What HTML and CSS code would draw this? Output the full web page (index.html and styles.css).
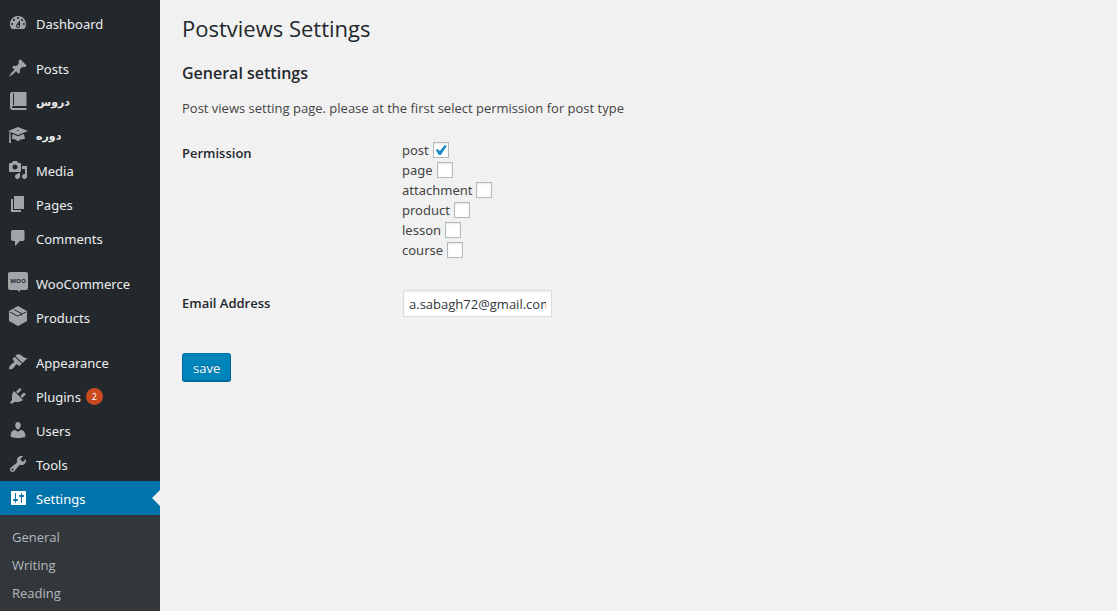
FILE: index.html
```html
<!DOCTYPE html>
<html lang="en">
<head>
<meta charset="utf-8">
<title>Postviews Settings</title>
<link rel="stylesheet" href="styles.css">
</head>
<body>
<div class="layout">
  <nav class="sidebar" aria-label="Main menu">
    <ul class="menu">
      <li><a class="menu-link" href="#"><svg class="icon" viewBox="0 0 20 20"><path fill-rule="evenodd" d="M3.76 16h12.48A7.998 7.998 0 0 0 10 3a7.998 7.998 0 0 0-6.24 13zM10 4c.55 0 1 .45 1 1s-.45 1-1 1-1-.45-1-1 .45-1 1-1zM6 6c.55 0 1 .45 1 1s-.45 1-1 1-1-.45-1-1 .45-1 1-1zm8 0c.55 0 1 .45 1 1s-.45 1-1 1-1-.45-1-1 .45-1 1-1zM12 7v6c0 1.100-.9 2-2 2s-2-.9-2-2c0-.57.24-1.080.63-1.450zM4 10c.55 0 1 .45 1 1s-.45 1-1 1-1-.45-1-1 .45-1 1-1zm12 0c.55 0 1 .45 1 1s-.45 1-1 1-1-.45-1-1 .45-1 1-1zm-5 3c0-.55-.45-1-1-1s-1 .45-1 1 .45 1 1 1 1-.45 1-1z"/></svg><span class="label">Dashboard</span></a></li>
      <li class="group"><a class="menu-link" href="#"><svg class="icon" viewBox="0 0 20 20"><path d="M10.44 3.02l1.82-1.82 6.36 6.35-1.83 1.82c-1.05-.68-2.48-.57-3.41.36l-.75.75c-.92.93-1.04 2.35-.35 3.41l-1.83 1.82-2.41-2.41-2.8 2.79c-.42.42-3.38 2.71-3.8 2.29s1.86-3.39 2.28-3.81l2.79-2.79L4.1 9.36l1.83-1.82c1.05.69 2.48.57 3.4-.36l.75-.75c.93-.92 1.05-2.35.36-3.41z"/></svg><span class="label">Posts</span></a></li>
      <li><a class="menu-link" href="#"><svg class="icon" viewBox="0 1 20 20"><path fill-rule="evenodd" d="M4 1h14.500v14H5c-.6 0-1 .4-1 1s.4 1 1 1h13.500v2H4.500C3 19 2 18 2 16.500V3c0-1.200.8-2 2-2zm1 1.500V14h1V2.500z"/></svg><span class="label persian" lang="fa">دروس</span></a></li>
      <li><a class="menu-link" href="#"><svg class="icon" viewBox="0 1 20 20"><path fill-rule="evenodd" d="M10 2l10 4-10 4-7.500-3L3 18H1l.5-11.400L0 6zm0 3c-.55 0-1 .22-1 .5s.45.5 1 .5 1-.22 1-.5-.45-.5-1-.5z"/><path d="M4.500 9l5.500 2.200L15.500 9c.7 1 1.200 2.100 1.400 5-3.200-.3-5.600.6-6.900 2.500-1.300-1.900-3.400-2.800-6-2.500z"/></svg><span class="label persian" lang="fa">دوره</span></a></li>
      <li><a class="menu-link" href="#"><svg class="icon" viewBox="0 0 20 20"><path fill-rule="evenodd" d="M13 11V4c0-.55-.45-1-1-1h-1.67L9 1H5L3.67 3H2c-.55 0-1 .45-1 1v7c0 .55.45 1 1 1h10c.55 0 1-.45 1-1zM7 4.5c1.38 0 2.5 1.12 2.5 2.5S8.38 9.5 7 9.5 4.5 8.38 4.5 7 5.62 4.5 7 4.5zM14 6h5v10.5c0 1.38-1.12 2.5-2.5 2.5S14 17.88 14 16.5s1.12-2.5 2.5-2.5c.17 0 .34.02.5.05V9h-3V6zm-4 8.05V13h2v3.5c0 1.38-1.12 2.5-2.5 2.5S7 17.88 7 16.5 8.12 14 9.5 14c.17 0 .34.02.5.05z"/></svg><span class="label">Media</span></a></li>
      <li><a class="menu-link" href="#"><svg class="icon" viewBox="0 0 20 20"><path d="M6 15V2h10v13H6zm-1 1h8v2H3V5h2v11z"/></svg><span class="label">Pages</span></a></li>
      <li><a class="menu-link" href="#"><svg class="icon" viewBox="0 0 20 20"><path d="M5 2h10c1 0 1.500.6 1.500 1.500V11c0 1.100-.6 2-1.500 2h-3l-5 5v-5H5c-1 0-2-.9-2-2V4c0-1.100.9-2 2-2z"/></svg><span class="label">Comments</span></a></li>
      <li class="group"><a class="menu-link" href="#"><svg class="icon" viewBox="0 1 20 20" aria-hidden="true"><path d="M2 0h16a2 2 0 0 1 2 2v14a2 2 0 0 1-2 2h-6v2l-3-2H2a2 2 0 0 1-2-2V2a2 2 0 0 1 2-2z"/><text class="woo" x="10" y="11" text-anchor="middle">WOO</text></svg><span class="label">WooCommerce</span></a></li>
      <li><a class="menu-link" href="#"><svg class="icon" viewBox="0 1 20 20"><path d="M10 0l9 5v10l-9 5-9-5V5z"/><path class="cut" d="M2 6l7.500 4L18 6M6 3.500l7.500 4v2"/></svg><span class="label">Products</span></a></li>
      <li class="group"><a class="menu-link" href="#"><svg class="icon" viewBox="0 0 20 20"><path d="M14.480 11.060L7.410 3.990l1.500-1.500c.5-.56 2.300-.47 3.510.32 1.210.8 1.430 1.280 2.910 2.100 1.180.64 2.450 1.260 4.450.85zm-.71.71L6.700 4.700 4.930 6.470c-.39.39-.39 1.020 0 1.410l1.060 1.060c.39.39.39 1.030 0 1.420-.6.6-1.430 1.110-2.210 1.690-.35.26-.7.53-1.010.84C1.430 14.230.4 16.080 1.400 17.070c.99 1 2.840-.03 4.180-1.360.31-.31.58-.66.85-1.020.57-.78 1.080-1.610 1.690-2.210.39-.39 1.020-.39 1.410 0l1.060 1.060c.39.39 1.020.39 1.410 0z"/></svg><span class="label">Appearance</span></a></li>
      <li><a class="menu-link" href="#"><svg class="icon" viewBox="0 0 20 20"><path d="M13.110 4.360L9.870 7.600 8 5.730l3.240-3.240c.35-.34 1.050-.2 1.560.32.52.51.66 1.210.31 1.550zm-8 1.770l.91-1.120 9.010 9.010-1.190.84c-.71.71-2.630 1.160-3.820 1.160H6.140L4.900 17.260c-.59.59-1.540.59-2.120 0-.59-.58-.59-1.530 0-2.120l1.240-1.240v-3.880c0-1.130.4-3.190 1.090-3.890zm7.260 3.970l3.240-3.240c.34-.35 1.040-.21 1.550.31.52.51.66 1.210.31 1.550l-3.240 3.250z"/></svg><span class="label">Plugins</span><span class="badge">2</span></a></li>
      <li><a class="menu-link" href="#"><svg class="icon" viewBox="0 0 20 20"><path d="M10 9.250c-2.270 0-2.730-3.440-2.730-3.440C7 4.020 7.820 2 9.970 2c2.160 0 2.980 2.020 2.710 3.810 0 0-.41 3.440-2.680 3.440zm0 2.570L12.720 10c2.390 0 4.520 2.330 4.520 4.530v2.490s-3.650 1.130-7.240 1.130c-3.650 0-7.240-1.130-7.240-1.130v-2.490c0-2.250 1.940-4.480 4.470-4.480z"/></svg><span class="label">Users</span></a></li>
      <li><a class="menu-link" href="#"><svg class="icon" viewBox="0 0 20 20"><path fill-rule="evenodd" d="M16.680 9.770c-1.340 1.340-3.300 1.670-4.950.99l-5.410 6.520c-.99.99-2.590.99-3.580 0s-.99-2.590 0-3.570l6.520-5.420c-.68-1.650-.35-3.610.99-4.950 1.280-1.280 3.120-1.620 4.720-1.060l-2.890 2.890 2.820 2.820 2.860-2.870c.53 1.580.18 3.390-1.080 4.650zM3.810 16.210c.4.39 1.040.39 1.430 0 .4-.4.4-1.040 0-1.430-.39-.4-1.030-.4-1.430 0-.39.39-.39 1.030 0 1.430z"/></svg><span class="label">Tools</span></a></li>
      <li>
        <a class="menu-link current" href="#" aria-current="page"><svg class="icon" viewBox="0 0 20 20"><path fill-rule="evenodd" d="M18 16V4c0-.55-.45-1-1-1H4c-.55 0-1 .45-1 1v12c0 .55.45 1 1 1h13c.55 0 1-.45 1-1zM8 11h1c.55 0 1 .45 1 1s-.45 1-1 1H8v1.500c0 .28-.22.5-.5.5s-.5-.22-.5-.5V13H6c-.55 0-1-.45-1-1s.45-1 1-1h1V5.500c0-.28.22-.5.5-.5s.5.22.5.5V11zm5-2h-1c-.55 0-1-.45-1-1s.45-1 1-1h1V5.500c0-.28.22-.5.5-.5s.5.22.5.5V7h1c.55 0 1 .45 1 1s-.45 1-1 1h-1v5.500c0 .28-.22.5-.5.5s-.5-.22-.5-.5V9z"/></svg><span class="label">Settings</span></a>
        <ul class="submenu">
          <li><a href="#">General</a></li>
          <li><a href="#">Writing</a></li>
          <li><a href="#">Reading</a></li>
        </ul>
      </li>
    </ul>
  </nav>
  <main class="content">
    <h1>Postviews Settings</h1>
    <h2>General settings</h2>
    <p>Post views setting page. please at the first select permission for post type</p>
    <form>
      <div class="field" role="group" aria-labelledby="permission">
        <span class="field-name" id="permission">Permission</span>
        <div class="options">
          <label>post <input type="checkbox" checked></label>
          <label>page <input type="checkbox"></label>
          <label>attachment <input type="checkbox"></label>
          <label>product <input type="checkbox"></label>
          <label>lesson <input type="checkbox"></label>
          <label>course <input type="checkbox"></label>
        </div>
      </div>
      <div class="field">
        <label class="field-name" for="email">Email Address</label>
        <input class="text-input" id="email" type="text" value="a.sabagh72@gmail.com">
      </div>
      <button class="save" type="button">save</button>
    </form>
  </main>
</div>
</body>
</html>
```
FILE: styles.css
```css
* { box-sizing: border-box; }

body {
  margin: 0;
  background: #f1f1f1;
  color: #444;
  font: 13px/20px "Open Sans", "Noto Sans", sans-serif;
}

a { color: inherit; text-decoration: none; }

ul { list-style: none; margin: 0; padding: 0; }

.layout {
  display: grid;
  grid-template-columns: 160px 1fr;
  height: 100vh;
  overflow: hidden;
}

.sidebar {
  background: #23282d;
  font-family: "Noto Sans", "Open Sans", sans-serif;
  overflow: hidden;
}

.menu { padding-top: 6px; }

.group { margin-top: 11px; }

.menu-link {
  position: relative;
  display: flex;
  align-items: center;
  height: 34px;
  padding: 0 8px;
  color: #eee;
}

.icon { width: 20px; height: 20px; margin-right: 8px; fill: #a0a5aa; flex: none; overflow: visible; }

.label { padding-top: 2px; }

.woo { fill: #23282d; font: bold 6px "Open Sans", sans-serif; }

.cut { fill: none; stroke: #23282d; stroke-width: 1; }

.persian { font: bold 11px/20px "DejaVu Sans", sans-serif; }

.badge {
  min-width: 17px;
  margin-left: 5px;
  border-radius: 9px;
  background: #ca4a1f;
  color: #fff;
  font-size: 9px;
  line-height: 17px;
  text-align: center;
}

.current { background: #0073aa; color: #fff; }

.current .icon { fill: #fff; }

.current::after {
  content: "";
  position: absolute;
  right: 0;
  top: 9px;
  border: 8px solid transparent;
  border-left: 0;
  border-right-color: #f1f1f1;
}

.submenu { padding: 8px 0; background: #32373c; color: #b4b9be; }

.submenu a { display: block; padding: 4px 12px; font-family: "Open Sans", "Noto Sans", sans-serif; }

.content { padding: 13px 22px; }

h1 { margin: 0; color: #23282d; font-size: 22px; font-weight: 400; line-height: 30px; }

h2 { margin: 20px 0 0; color: #23282d; font-size: 16px; font-weight: 600; line-height: 20px; }

p { margin: 15px 0 22px; }

.field { display: grid; grid-template-columns: 220px 1fr; align-items: start; }

.field + .field { margin-top: 30px; }

.field-name { padding-top: 3px; color: #23282d; font-weight: 600; }

.options { display: grid; justify-items: start; font-family: "Noto Sans", "Open Sans", sans-serif; }

.options label { display: flex; align-items: center; gap: 4px; }

input[type="checkbox"] {
  appearance: none;
  width: 16px;
  height: 16px;
  margin: 0;
  border: 1px solid #b4b9be;
  background: #fff;
  box-shadow: inset 0 1px 2px rgba(0, 0, 0, 0.1);
}

input[type="checkbox"]:checked::before {
  content: "";
  display: block;
  width: 14px;
  height: 14px;
  background: #1e8cbe;
  clip-path: polygon(11px 2px, 13px 3px, 7px 12px, 5px 12px, 2px 7px, 4px 6px, 6px 8px);
}

.text-input {
  width: 149px;
  height: 27px;
  margin: 0 1px;
  padding: 3px 5px;
  border: 1px solid #ddd;
  background: #fff;
  box-shadow: inset 0 1px 2px rgba(0, 0, 0, 0.07);
  color: #32373c;
  font: inherit;
}

.save {
  height: 29px;
  margin-top: 36px;
  padding: 0 10px;
  border: 1px solid #006799;
  border-top-color: #0073aa;
  border-radius: 3px;
  background: #0085ba;
  box-shadow: inset 0 -1px 0 #006799;
  color: #fff;
  font: inherit;
  text-shadow: 0 -1px 1px #006799;
}
```
